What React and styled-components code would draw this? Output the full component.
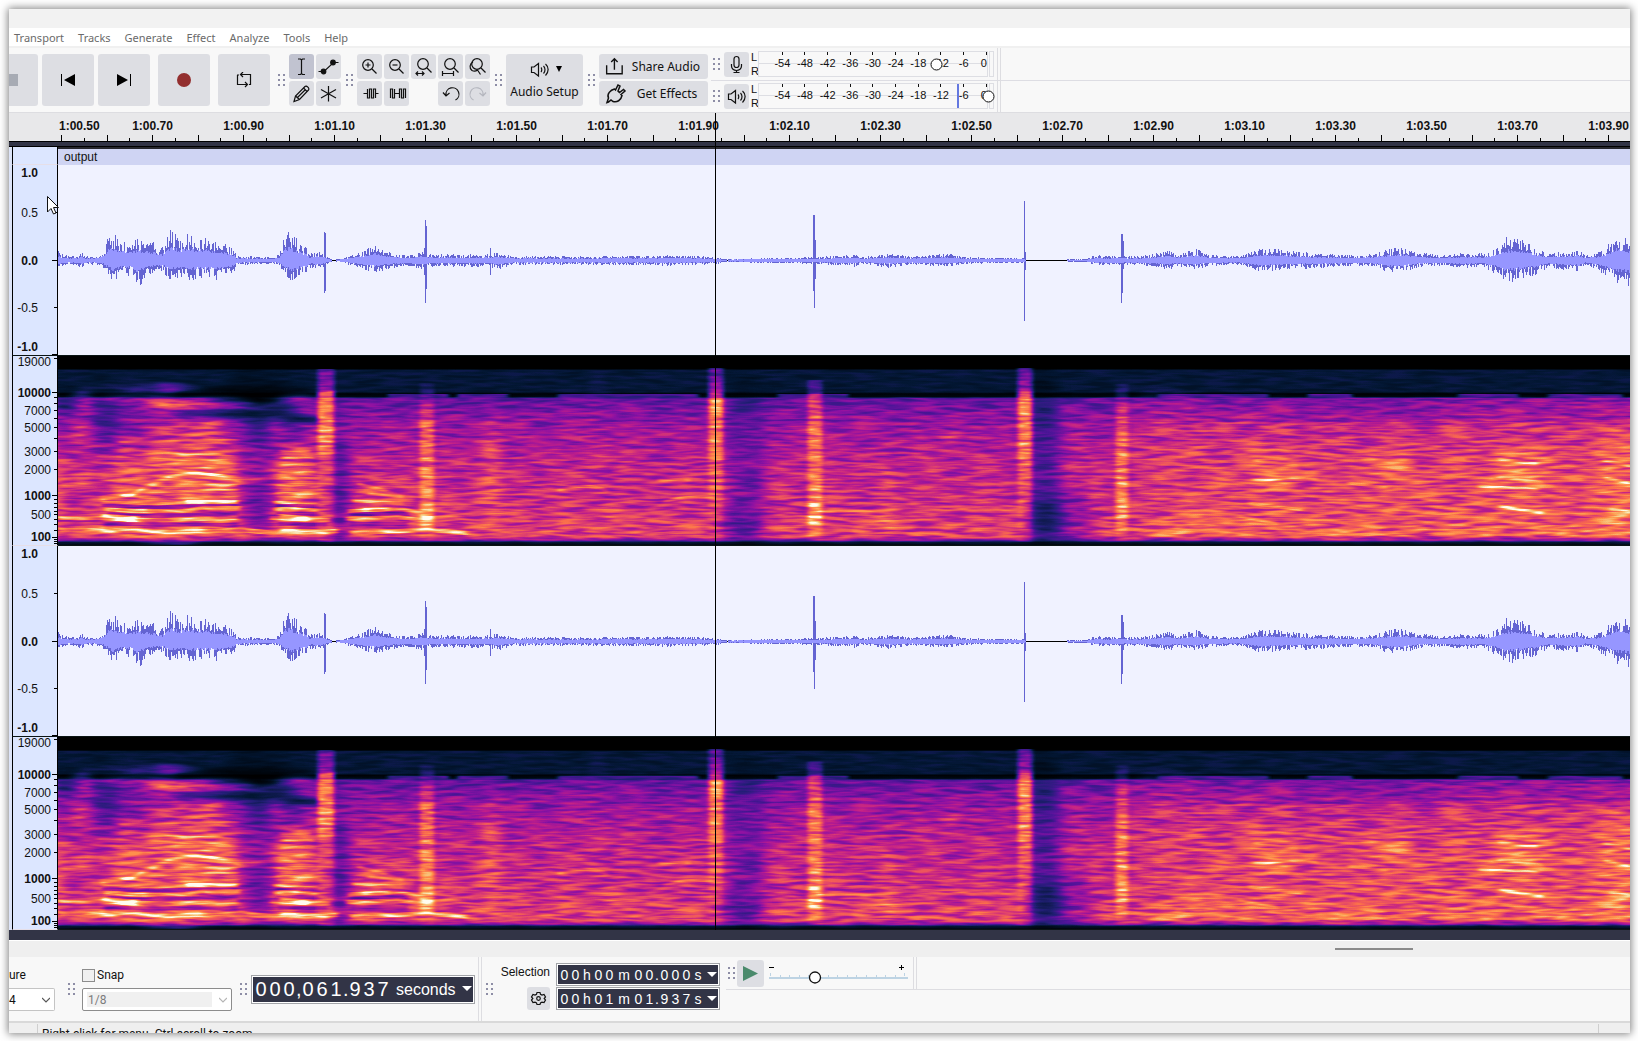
import React from "react";
import styled, { createGlobalStyle, css } from "styled-components";

const GlobalStyle = createGlobalStyle`
  * {
    box-sizing: border-box;
  }

  body {
    margin: 0;
    background: #ffffff;
    font-family: "Noto Sans", sans-serif;
    font-size: 12px;
    color: #111111;
  }

  button,
  input,
  select {
    font: inherit;
    color: inherit;
  }
`;

const Window = styled.div`
  position: relative;
  margin: 9px 8px 8px 9px;
  background: #f8f8f8;
  box-shadow: 0 0 8px 1px rgba(0, 0, 0, 0.5);
  overflow: hidden;
`;

const TitleBar = styled.div`
  height: 19px;
  background: #f2f2f2;
`;

const MenuBar = styled.nav`
  display: flex;
  align-items: center;
  gap: 14px;
  height: 20px;
  padding: 2px 5px 0;
  background: #ffffff;
  border-bottom: 2px solid #f0f0f0;
`;

const MenuLink = styled.a`
  font-family: "Noto Sans", sans-serif;
  font-size: 11px;
  line-height: 16px;
  color: #6a6a6a;
  text-decoration: none;
`;

/* ---------- toolbars ---------- */

const Toolbar = styled.div`
  display: flex;
  align-items: stretch;
  height: 65px;
  border-bottom: 1px solid #dddde1;
`;

const Group = styled.div`
  display: flex;
  align-items: center;
  gap: ${(p) => p.$gap || 0}px;
  padding-left: ${(p) => p.$pad || 0}px;
`;

const Button = styled.button`
  display: flex;
  flex-direction: ${(p) => (p.$column ? "column" : "row")};
  align-items: center;
  justify-content: center;
  flex: none;
  width: ${(p) => p.$w || 25}px;
  height: ${(p) => p.$h || 25}px;
  padding: 0;
  border: 0;
  border-radius: ${(p) => (p.$cut ? "0 3px 3px 0" : "3px")};
  background: ${(p) => (p.$active ? "#c1c3d0" : "#dddee3")};
  line-height: 16px;
  white-space: nowrap;
`;

const StopButton = styled(Button)`
  justify-content: flex-start;
`;

const ToolGrid = styled.div`
  display: grid;
  grid-template-columns: repeat(${(p) => p.$cols}, 25px);
  grid-auto-rows: 25px;
  gap: 2px;
`;

const WideButton = styled(Button)`
  justify-content: flex-start;
  gap: 6px;
  padding-left: 4px;
`;

const WideLabel = styled.span`
  flex: 1;
  padding-right: 8px;
  text-align: center;
`;

const SetupTop = styled.span`
  display: flex;
  align-items: center;
  gap: 4px;
  height: 18px;
  margin-bottom: 6px;
`;

const Stack = styled.div`
  display: flex;
  flex-direction: column;
  gap: ${(p) => p.$gap || 0}px;
`;

const MeterArea = styled.div`
  display: flex;
  flex-direction: column;
  flex: 1;
  background: linear-gradient(#dddde3, #dddde3) 0 32px / 100% 1px no-repeat;
`;

const MeterRow = styled.div`
  display: flex;
  align-items: center;
  height: 32px;
  padding-left: 2px;
`;

const Channels = styled.div`
  width: 9px;
  padding-left: 2px;
  font-family: "Liberation Sans", sans-serif;
  font-size: 11px;
  line-height: 14px;
`;

const MeterScale = styled.div`
  position: relative;
  display: grid;
  grid-template-columns: repeat(9, 1fr) 12px;
  align-items: center;
  width: 230px;
  height: 26px;
  padding-left: 12px;
  border: 1px solid #dddee3;
  background: linear-gradient(#dddee3, #dddee3) 0 11px / 100% 1px no-repeat;
  font-family: "Liberation Sans", sans-serif;
  font-size: 11px;
  text-align: center;
`;

const MeterMark = styled.span`
  height: 24px;
  line-height: 23px;
  text-align: ${(p) => (p.$last ? "right" : "center")};
  background: linear-gradient(#111, #111) ${(p) => (p.$last ? "100%" : "50%")} 0 / 1px 3px no-repeat;
`;

const ClipBox = styled.div`
  width: 5px;
  height: 26px;
  margin-left: 1px;
  border: 1px solid #dddee3;
`;

const MeterKnob = styled.svg`
  position: absolute;
  top: 6px;
  left: ${(p) => p.$left}px;
`;

const MeterPeak = styled.div`
  position: absolute;
  top: 0;
  left: 198px;
  width: 2px;
  height: 24px;
  background: #6478e0;
`;

const Rails = styled.div`
  flex: none;
  width: 4px;
  height: ${(p) => p.$h || 64}px;
  border-left: 1px solid #dddde1;
  border-right: 1px solid #dddde1;
`;

const MeterBlock = styled.div`
  display: flex;
`;

/* ---------- timeline ---------- */

const Timeline = styled.div`
  height: 28px;
  background: #e8e8ea;
  overflow: hidden;
`;

const TimeLabels = styled.div`
  display: flex;
  height: 22px;
  padding: 5px 0 0 50px;
  font: bold 12px/16px "Liberation Sans", sans-serif;
`;

const TimeLabel = styled.span`
  flex: none;
  width: ${(p) => (p.$first ? 48 : 91)}px;
  text-align: ${(p) => (p.$first ? "left" : "center")};
`;

const Ticks = styled.svg`
  display: block;
  width: 100%;
  height: 6px;
`;

const DarkBar = styled.div`
  height: ${(p) => p.$h}px;
  background: #323446;
  border-top: ${(p) => (p.$edge ? 1 : 0)}px solid #000;
  border-bottom: ${(p) => (p.$edge ? 1 : 0)}px solid #000;
`;

/* ---------- track ---------- */

const TrackArea = styled.div`
  position: relative;
`;

const TrackRow = styled.div`
  display: grid;
  grid-template-columns: 3px 46px minmax(0, 1fr);
  background: #dde4f8;
`;

const Side = styled.div`
  display: flex;
  justify-content: flex-end;
  border: solid #000;
  border-width: 0 1px;
  background: #dce6ff;
  ${(p) =>
    p.$rule &&
    css`
      border-bottom: 1px solid ${p.$rule};
    `}
`;

const ClipHeader = styled.div`
  height: 18px;
  padding-left: 6px;
  border-top: 2px solid #26262c;
  background: #cfd4f3;
  font: 12px/16px "Liberation Sans", sans-serif;
`;

const ScaleLabels = styled.div`
  display: grid;
  height: ${(p) => p.$h}px;
  grid-template-rows: ${(p) => p.$rows};
  align-items: ${(p) => p.$align};
  justify-items: end;
  padding-right: ${(p) => p.$pad}px;
  font: 12px/14px "Liberation Sans", sans-serif;
`;

const ScaleLabel = styled.span`
  font-weight: ${(p) => (p.$bold ? "bold" : "normal")};
`;

const ScaleTicks = styled.svg`
  display: block;
  flex: none;
  width: 6px;
  height: ${(p) => p.$h}px;
`;

const Plot = styled.div`
  height: ${(p) => p.$h}px;
  background: ${(p) => p.$bg};
  border-bottom: 1px solid #0a1414;

  svg {
    display: block;
    width: 100%;
    height: 100%;
  }
`;

const Playhead = styled.div`
  position: absolute;
  top: 0;
  bottom: 0;
  left: 706px;
  width: 1px;
  background: #000;
  z-index: 2;
`;

const Pointer = styled.svg`
  position: absolute;
  left: 38px;
  top: 83px;
`;

const ScrollStrip = styled.div`
  display: flex;
  justify-content: flex-end;
  height: 17px;
  padding: 7px 217px 0 0;
  border-top: 1px solid #fff;
  background: #efefef;
`;

const Thumb = styled.div`
  width: 78px;
  height: 2px;
  background: #8a8a8a;
`;

/* ---------- bottom bar ---------- */

const BottomBar = styled.div`
  display: flex;
  height: 64px;
`;

const Signature = styled.div`
  width: 46px;
  padding-top: 9px;
`;

const FieldLabel = styled.label`
  display: flex;
  align-items: center;
  gap: 2px;
  height: 18px;
  font: 12px/18px Roboto, sans-serif;
`;

const SelectBox = styled.div`
  position: relative;
  width: ${(p) => p.$w}px;
  height: 23px;
  margin-top: 4px;
`;

const Select = styled.select`
  display: block;
  width: 100%;
  height: 100%;
  padding: 0 4px 0 ${(p) => (p.$cut ? 0 : 5)}px;
  appearance: none;
  border: 1px solid ${(p) => (p.$cut ? "#c4c4c4" : "#8c8c8c")};
  border-left-width: ${(p) => (p.$cut ? 0 : 1)}px;
  border-radius: ${(p) => (p.$cut ? "0 2px 2px 0" : "2px")};
  background: ${(p) =>
    p.$cut ? "#fff" : "linear-gradient(#f0f0f0, #f0f0f0) 4px 3px / 125px 15px no-repeat #fff"};
  font: 12px Roboto, sans-serif;
  opacity: 1;
  color: ${(p) => (p.$cut ? "#111" : "#7c7c7c")};
`;

const Chevron = styled.svg`
  position: absolute;
  right: 5px;
  top: 9px;
  pointer-events: none;
`;

const Check = styled.input`
  appearance: none;
  width: 13px;
  height: 13px;
  margin: 0;
  border: 1px solid #8c8c8c;
  background: #f0f0f0;
`;

const SnapGroup = styled.div`
  width: 150px;
  margin-left: 7px;
  padding-top: 9px;
`;

const TimeField = styled.div`
  display: flex;
  align-items: center;
  width: ${(p) => (p.$big ? 224 : 164)}px;
  height: ${(p) => (p.$big ? 29 : 23)}px;
  padding-left: 2px;
  border: 1px solid #a2a4a8;
  outline: 1px solid #fff;
  outline-offset: -2px;
  background: linear-gradient(#323446, #323446) 1px 1px / calc(100% - 2px) calc(100% - 2px) no-repeat;
  color: #fff;
  font-family: "Liberation Sans", sans-serif;
  font-size: ${(p) => (p.$big ? 20 : 14)}px;
`;

const Digit = styled.span`
  width: ${(p) => p.$w}px;
  flex: none;
  text-align: center;
`;

const Unit = styled.span`
  flex: 1;
  padding: 2px 0 0 6px;
  font-size: 16px;
`;

const Drop = styled.button`
  display: flex;
  align-items: center;
  justify-content: flex-end;
  flex: none;
  width: 14px;
  height: 100%;
  margin-left: auto;
  padding: 0 2px 0 0;
  border: 0;
  background: none;
  color: #fff;
`;

const SelectionGroup = styled.div`
  display: grid;
  grid-template-columns: 51px 164px;
  grid-auto-rows: 23px;
  gap: 1px 6px;
  justify-items: end;
  padding: 6px 0 0 6px;
`;

const SelectionLabel = styled.span`
  font: 12px/18px "Liberation Sans", sans-serif;
`;

const SpeedArea = styled.div`
  flex: 1;
  background: linear-gradient(#dddde1, #dddde1) 6px 32px / 100% 1px no-repeat;
`;

const SpeedRow = styled.div`
  display: flex;
  align-items: center;
  height: 32px;
  padding: 0 0 0 8px;
`;

const Speed = styled.label`
  position: relative;
  width: 141px;
  height: 27px;
  margin: 0 4px 0 4px;
`;

const Range = styled.input`
  position: absolute;
  inset: 0;
  width: 100%;
  height: 100%;
  margin: 0;
  opacity: 0;
`;

const StatusBar = styled.footer`
  display: flex;
  height: 12px;
  border-top: 2px solid #d9d9d9;
  background: #efefef;
  font: 12px/14px Roboto, sans-serif;
  overflow: hidden;
`;

const StatusCell = styled.div`
  flex: ${(p) => (p.$w ? "none" : 1)};
  width: ${(p) => p.$w || 0}px;
  height: 14px;
  margin-top: 1px;
  padding: 3px 0 0 4px;
  border-right: 1px solid ${(p) => (p.$end ? "transparent" : "#cfcfcf")};
  white-space: nowrap;
`;

/* ---------- icons ---------- */

const GRIP_DOTS = [0, 5, 10];

function Grip({ color = "#8e8ea6" }) {
  return (
    <svg width="7" height="12" fill={color} aria-hidden="true">
      {GRIP_DOTS.map((y) => (
        <g key={y}>
          <rect x="0" y={y} width="2" height="2" />
          <rect x="5" y={y} width="2" height="2" />
        </g>
      ))}
    </svg>
  );
}

function Icon({ size = 25, children }) {
  return (
    <svg
      width={size}
      height={size}
      viewBox={`0 0 ${size} ${size}`}
      fill="none"
      stroke="#111"
      strokeWidth="1.2"
      aria-hidden="true"
    >
      {children}
    </svg>
  );
}

const Lens = ({ cx = 11, cy = 11 }) => (
  <>
    <circle cx={cx} cy={cy} r="5.3" />
    <path d={`M${cx + 4} ${cy + 4}L${cx + 8.5} ${cy + 8.5}`} />
  </>
);

const ICONS = {
  select: <path d="M9 5h2.500l1 1 1-1H16M9 20.500h2.500l1-1 1 1H16M12.500 6v14" />,
  envelope: (
    <>
      <path d="M2.500 17.500H8L17.500 8.500H22.500" />
      <circle cx="7.5" cy="17.500" r="2.300" fill="#111" />
      <circle cx="17" cy="8.500" r="2.300" fill="#111" />
    </>
  ),
  draw: (
    <>
      <path d="M5 20.500l1.500-5.500L16 5.500c1.500-1.500 5 2 3.500 3.500L10.500 18.500z" />
      <path d="M6.500 15l4 3.500M14.500 7l3.500 3.500M8.500 16.500l8-8" />
    </>
  ),
  multi: <path d="M12.500 5v15.500M5 8.500l15 8.500M20 8.500l-15 8.500" />,
  zoomIn: (
    <>
      <Lens />
      <path d="M8.500 11h5M11 8.500v5" />
    </>
  ),
  zoomOut: (
    <>
      <Lens />
      <path d="M8.500 11h5" />
    </>
  ),
  zoomSel: (
    <>
      <Lens cx={12} cy={10} />
      <path d="M5 19.500h8M7 17.500l-2 2 2 2M11 17.500l2 2-2 2" />
    </>
  ),
  zoomFit: (
    <>
      <Lens cx={12} cy={10} />
      <path d="M4.500 19.500h11M4.500 17v5M15.500 17v5" />
    </>
  ),
  zoomToggle: (
    <>
      <Lens cx={12} cy={10} />
      <path d="M8 8a5 5 0 0 0-1 8.500 5 5 0 0 0 5.500-.5M12.500 16l3 4.500" />
    </>
  ),
  trim: <path d="M6.500 12.500H10.500V8M10.500 8V17H12.500V8H14.500V17H16.500V8H18.500V17M18.500 12.500H21.500" />,
  silence: (
    <path d="M6.500 17V8H8.500V17H10.500V8M10.500 12.500h5M15.500 17V8H17.500V17H19.500V8H21.500V17" />
  ),
  undo: <path d="M8 14a6.500 6.500 0 1 1 9.500 5M5 11.500l3 3.500 3.500-3" />,
  redo: (
    <path
      stroke="#b4b6be"
      d="M18 14a6.500 6.500 0 1 0-9.500 5M21 11.500l-3 3.500-3.500-3"
    />
  ),
  share: <path strokeWidth="1.500" d="M4 11v9.500h17V11M12.500 16V4M9 7.500l3.500-3.500L16 7.500" />,
  effects: (
    <path
      strokeWidth="1.500"
      d="M4 21.500l1.500-4.500c-2-4 2-8 6-9l1 1 2.500-5 2 1-2 5 1.500 1.500 4-3 1.500 1.500-4 3.500 1 1c-1 5-5 7-9 6l-2-1.500L5.500 21z"
    />
  ),
  mic: (
    <>
      <rect x="10" y="4.500" width="5" height="11" rx="2.500" />
      <path d="M7.500 12v2a5 4.500 0 0 0 10 0v-2M12.500 18.500v2M9.500 20.500h6" />
    </>
  ),
  speaker: (
    <path d="M4.500 10v5.500H7l4.500 3.500V6.500L7 10zM14 10.500c1 1 1 3.500 0 4.500M16.500 9c2 2 2 5.500 0 7.500M18.500 7c3.500 3 3.500 8 0 11.500" />
  ),
};

const Gear = () => (
  <Icon size={23}>
    <circle cx="11.500" cy="11.500" r="1.800" />
    <path d="M10 5.500h3l.5 1.800 1.500.8 2-.6 1.500 2.500-1.300 1.500 1.300 1.500-1.500 2.500-2-.4-1.500.9-.5 1.500h-3l-.5-1.500-1.500-.9-2 .4-1.500-2.500 1.300-1.500L4.500 10 6 7.500l2 .6 1.500-.8z" />
  </Icon>
);

const DropArrow = () => (
  <svg width="10" height="6" fill="#fff" aria-hidden="true">
    <path d="M0 0H10L5 5z" />
  </svg>
);

function PickArrow({ color }) {
  return (
    <Chevron width="8" height="6" fill="none" stroke={color} strokeWidth="1.200">
      <path d="M0 1l4 4 4-4" />
    </Chevron>
  );
}

/* ---------- drawings ---------- */

const PLOT_WIDTH = 1572;

// [x, amplitude above, amplitude below]
const ENVELOPE = [
  [0, 11, 9], [3, 6, 5], [12, 4, 4], [20, 5, 5], [23, 9, 8], [27, 4, 4], [40, 4, 4], [46, 12, 9],
  [50, 25, 16], [54, 28, 24], [62, 24, 16], [72, 20, 16], [80, 24, 28], [87, 19, 18], [94, 20, 15],
  [100, 13, 12], [104, 14, 12], [110, 28, 18], [113, 32, 21], [120, 25, 17], [132, 27, 21],
  [142, 26, 18], [152, 22, 20], [160, 20, 19], [170, 16, 16], [176, 10, 11], [178, 4, 4],
  [190, 4, 4], [215, 3, 3], [221, 7, 6], [227, 30, 16], [234, 28, 24], [242, 18, 16],
  [248, 15, 14], [251, 7, 7], [262, 10, 9], [271, 2, 2], [274, 0, 0], [285, 2, 2], [300, 8, 8],
  [316, 15, 13], [330, 9, 9], [348, 5, 5], [365, 9, 9], [372, 6, 6], [400, 6, 6], [430, 6, 6],
  [440, 8, 9], [455, 4, 4], [520, 4, 4], [620, 5, 5], [660, 3, 3], [664, 1, 1], [700, 2, 2],
  [750, 3, 3], [770, 4, 4], [797, 6, 6], [803, 3, 3], [830, 7, 7], [850, 4, 4], [890, 7, 6],
  [910, 3, 3], [966, 2, 2], [968, 0, 0], [1006, 0, 0], [1010, 1, 1], [1028, 1, 1], [1038, 6, 5],
  [1045, 4, 4], [1060, 5, 5], [1080, 4, 4], [1112, 10, 9], [1118, 6, 6], [1138, 12, 9],
  [1150, 6, 5], [1180, 4, 4], [1204, 13, 12], [1225, 11, 9], [1250, 8, 8], [1295, 5, 5],
  [1315, 7, 6], [1338, 14, 15], [1360, 8, 7], [1385, 5, 5], [1405, 8, 8], [1425, 7, 6],
  [1440, 14, 16], [1448, 24, 25], [1465, 20, 18], [1475, 14, 16], [1490, 7, 7], [1520, 11, 11],
  [1527, 5, 4], [1545, 10, 13], [1558, 26, 25], [1571, 22, 28],
];

const SPIKES = {
  266: [28, 32], 267: [27, 30], 366: [12, 14], 367: [40, 42], 368: [34, 28], 432: [12, 14],
  755: [45, 30], 756: [45, 47], 757: [20, 18], 966: [59, 60], 967: [8, 9], 1063: [26, 42],
  1064: [26, 32], 1065: [19, 8],
};

const noise = (i) => {
  const v = Math.sin(i * 127.1 + 11.7) * 43758.5453;
  return v - Math.floor(v);
};

function buildWave() {
  let outer = "";
  let inner = "";
  let seg = 0;
  for (let x = 0; x < PLOT_WIDTH; x += 1) {
    while (seg < ENVELOPE.length - 2 && ENVELOPE[seg + 1][0] <= x) seg += 1;
    const [x0, u0, d0] = ENVELOPE[seg];
    const [x1, u1, d1] = ENVELOPE[seg + 1];
    const t = (x - x0) / (x1 - x0);
    const env = [u0 + (u1 - u0) * t, d0 + (d1 - d0) * t];
    let up = env[0] * (0.32 + 0.65 * noise(x));
    let down = env[1] * (0.32 + 0.65 * noise(x + 5000));
    if (SPIKES[x]) [up, down] = SPIKES[x];
    up = Math.round(up);
    down = Math.round(down);
    if (up + down > 0) {
      const innerUp = Math.min(up, Math.round(env[0] * (0.3 + 0.16 * noise(x + 900))));
      const innerDown = Math.min(down, Math.round(env[1] * (0.3 + 0.16 * noise(x + 1900))));
      outer += `M${x} ${95 - up}V${96 + down}`;
      inner += `M${x} ${95 - innerUp}V${96 + innerDown}`;
    }
  }
  return { outer, inner };
}

const WAVE = buildWave();

function Waveform() {
  return (
    <svg viewBox="0 0 1572 190" preserveAspectRatio="none" shapeRendering="crispEdges" role="img" aria-label="Waveform">
      <rect x="0" y="95" width="1572" height="1" fill="#000" />
      <g transform="translate(.5 0)">
        <path d={WAVE.outer} stroke="#6464d2" strokeWidth="1" />
        <path d={WAVE.inner} stroke="#9696ff" strokeWidth="1" />
      </g>
    </svg>
  );
}

// [cx, cy, rx, ry, strength]
const GLOWS = [
  [112, 135, 70, 55, 0.16], [150, 110, 30, 45, 0.2], [110, 105, 20, 18, 0.2], [75, 125, 20, 20, 0.1],
  [235, 120, 18, 34, 0.28], [235, 160, 18, 24, 0.15], [24, 123, 8, 7, 0.35], [24, 76, 8, 12, 0.2],
  [110, 50, 26, 4, 0.4], [110, 50, 8, 3, 0.4], [110, 32, 12, 3, 0.4], [80, 43, 40, 3, 0.22],
  [85, 32, 60, 3, 0.15], [155, 48, 40, 6, 0.22], [240, 43, 18, 3, 0.26], [140, 72, 50, 10, 0.16],
  [24, 46, 9, 14, 0.2], [218, 76, 8, 14, 0.22], [0, 130, 8, 30, 0.25], [330, 135, 30, 20, 0.1],
  [390, 155, 12, 18, 0.15], [434, 130, 10, 50, 0.2], [434, 75, 10, 25, 0.1], [490, 140, 14, 30, 0.08],
  [540, 80, 12, 60, 0.06], [552, 156, 8, 10, 0.3], [690, 165, 6, 10, 0.1], [765, 130, 10, 40, 0.05],
  [830, 165, 10, 10, 0.25], [830, 140, 8, 30, 0.12], [893, 85, 7, 9, 0.25], [875, 115, 8, 14, 0.12],
  [822, 112, 8, 6, 0.15], [1037, 140, 7, 24, 0.18], [1115, 175, 16, 5, 0.4], [1138, 163, 8, 8, 0.3],
  [1150, 176, 30, 4, 0.15], [1105, 80, 40, 50, 0.06], [1210, 112, 32, 26, 0.14], [1215, 120, 22, 12, 0.12],
  [1330, 108, 24, 12, 0.22], [1345, 122, 16, 8, 0.18], [1460, 112, 34, 24, 0.2],
  [1465, 125, 24, 14, 0.14], [1465, 150, 24, 8, 0.14], [1562, 120, 22, 50, 0.18],
  [1190, 162, 8, 4, 0.4], [1560, 160, 12, 8, 0.35], [1510, 176, 16, 4, 0.3], [1566, 175, 12, 4, 0.4],
  [1280, 179, 24, 4, 0.25], [100, 175, 70, 4, 0.1],
];

const SHADES = [
  [195, 50, 40, 40, 0.3], [201, 150, 16, 40, 0.34], [282, 130, 8, 60, 0.5], [688, 100, 20, 90, 0.26],
  [683, 170, 26, 16, 0.45], [984, 100, 18, 100, 0.4], [988, 168, 22, 24, 0.5], [1015, 160, 30, 28, 0.25],
  [215, 70, 30, 30, 0.25], [48, 60, 14, 30, 0.3], [1310, 58, 80, 10, 0.08], [10, 52, 14, 10, 0.3],
];

const STREAKS = [
  [175, 58, 60, 2, 1], [190, 44, 34, 4, 1], [250, 63, 25, 3, 0.9], [190, 35, 60, 5, 0.6],
  [100, 90, 20, 3, 0.5], [40, 33, 30, 3, 0.6], [8, 50, 14, 2, 0.6], [60, 70, 20, 2, 0.4],
];

// purple wisps over the dark gap below 10 kHz
const WISPS = [
  [330, 60], [400, 50], [500, 90], [580, 60], [720, 70], [1100, 100], [1140, 36], [1180, 30],
  [1250, 44], [1400, 60], [1490, 50], [1540, 24],
];

// [x, top, width, stops] with stops as [offset, strength]
const CLICKS = [
  [260, 13, 16, [[0, 0.25], [0.12, 0.34], [0.14, 0.64], [0.3, 0.64], [0.49, 0.52], [0.5, 0.25], [1, 0.1]]],
  [362, 27, 14, [[0, 0.05], [0.2, 0.25], [0.3, 0.48], [0.6, 0.4], [0.85, 0.6], [1, 0]]],
  [651, 12, 14, [[0, 0.2], [0.14, 0.38], [0.15, 0.62], [0.35, 0.58], [0.6, 0.3], [1, 0.05]]],
  [750, 24, 14, [[0, 0.12], [0.15, 0.35], [0.35, 0.54], [0.6, 0.4], [0.85, 0.75], [1, 0]]],
  [960, 12, 14, [[0, 0.25], [0.13, 0.38], [0.14, 0.66], [0.45, 0.6], [0.65, 0.4], [1, 0.1]]],
  [1058, 28, 12, [[0, 0.05], [0.3, 0.35], [0.55, 0.5], [0.85, 0.52], [1, 0]]],
];

// [path, width, strength]
const HARMONICS = [
  ["M0 174L40 174L120 176L185 174L215 177L280 175M292 177L370 174L410 177", 4.500, 0.52],
  ["M42 173L58 174M222 175L270 176", 5, 0.5],
  ["M0 162L40 162L85 164L120 164L180 162M212 162L272 164M288 163L340 161L370 165", 4, 0.48],
  ["M44 161L60 162L78 163M222 161L250 163", 6, 0.7],
  ["M46 153L60 154L90 155L120 156L145 152L182 152M216 153L260 154M290 155L345 153L362 157", 3.500, 0.52],
  ["M58 154L88 155M220 153L240 153M305 154L332 153", 4, 0.65],
  ["M44 146L100 148L128 146L180 146M216 146L260 147M295 145L345 147", 3, 0.42],
  ["M128 146L180 146", 4, 0.7],
  ["M42 142L76 138L108 122L138 118L168 121L182 124", 5, 0.3],
  ["M64 140L76 138L86 132M108 121L138 117L168 120", 3, 0.5],
  ["M80 142L180 141M84 136L180 134M92 130L180 129M120 112L176 112M100 105L170 104M108 98L165 98", 2.500, 0.25],
  ["M218 137L262 138M218 130L262 131M220 123L262 122M222 116L258 116M222 109L258 109M224 102L256 102M222 95L252 95", 2.500, 0.35],
  ["M300 128L325 134L345 141M310 138L340 140", 3, 0.4],
  ["M182 123L260 123M60 86L180 84", 2.500, 0.2],
  ["M605 146Q625 140 657 141M600 124L632 124M500 134Q530 126 550 135", 3, 0.35],
  ["M940 130L960 130M760 156L960 153", 2.500, 0.2],
  ["M1196 104L1240 110M1195 124L1260 123M1190 147L1245 154M1180 160L1220 168M1330 132L1290 127", 3, 0.4],
  ["M1440 103L1480 108M1440 121L1485 127M1420 130L1480 134M1440 150L1485 157M1545 104L1572 110M1546 122L1572 127M1552 153L1572 156", 3, 0.5],
];

// gaps between the harmonics of the voiced parts
const VALLEYS = [
  "M46 168L180 169M220 168L270 169M292 168L350 168",
  "M50 158L90 160L180 157M218 158L262 158M292 158L350 158",
  "M44 150L110 151L180 149M218 150L262 150",
];

const RAMP = {
  r: "0 0.01 0.13 0.31 0.55 0.75 0.89 0.98 1 0.96 1",
  g: "0 0.09 0.12 0.08 0.07 0.12 0.27 0.42 0.6 0.82 0.99",
  b: "0 0.2 0.46 0.6 0.64 0.54 0.42 0.3 0.3 0.54 0.94",
};

function Spectrogram({ id }) {
  const f = (name) => `${id}-${name}`;
  return (
    <svg viewBox="0 0 1572 189" preserveAspectRatio="none" role="img" aria-label="Spectrogram">
      <defs>
        <linearGradient id={f("base")} x1="0" y1="0" x2="0" y2="189" gradientUnits="userSpaceOnUse">
          <stop offset="0" stopColor="#000" />
          <stop offset=".068" stopColor="#000" />
          <stop offset=".075" stopColor="#1c1c1c" />
          <stop offset=".19" stopColor="#1a1a1a" />
          <stop offset=".2" stopColor="#030303" />
          <stop offset=".215" stopColor="#0a0a0a" />
          <stop offset=".225" stopColor="#525252" />
          <stop offset=".35" stopColor="#6a6a6a" />
          <stop offset=".55" stopColor="#7e7e7e" />
          <stop offset=".8" stopColor="#888" />
          <stop offset=".95" stopColor="#9a9a9a" />
          <stop offset=".975" stopColor="#666" />
          <stop offset=".985" stopColor="#1c1c1c" />
          <stop offset="1" stopColor="#080808" />
        </linearGradient>
        <linearGradient id={f("warm")} x1="0" x2="1">
          <stop offset=".67" stopColor="#fff" stopOpacity="0" />
          <stop offset=".72" stopColor="#fff" stopOpacity=".12" />
          <stop offset="1" stopColor="#fff" stopOpacity=".18" />
        </linearGradient>
        {CLICKS.map(([x, , , stops]) => (
          <linearGradient key={x} id={f(`c${x}`)} x1="0" x2="0" y1="0" y2="1">
            {stops.map(([o, s]) => (
              <stop key={o} offset={o} stopColor="#fff" stopOpacity={s} />
            ))}
          </linearGradient>
        ))}
        <filter id={f("haze")} x="-5%" y="-5%" width="110%" height="110%">
          <feGaussianBlur stdDeviation="7 12" />
        </filter>
        <filter id={f("soft")} x="-5%" y="-5%" width="110%" height="110%">
          <feGaussianBlur stdDeviation="6 2.5" />
        </filter>
        <filter id={f("edge")} x="-5%" y="-5%" width="110%" height="110%">
          <feGaussianBlur stdDeviation="2 .7" />
        </filter>
        <filter id={f("heat")} x="0" y="0" width="1572" height="189" filterUnits="userSpaceOnUse" colorInterpolationFilters="sRGB">
          <feTurbulence type="fractalNoise" baseFrequency=".034 .3" numOctaves="2" seed="7" />
          <feColorMatrix values="2.2 0 0 0 -.6  2.2 0 0 0 -.6  2.2 0 0 0 -.6  0 0 0 0 1" result="grain" />
          <feComposite in="SourceGraphic" in2="grain" operator="arithmetic" k1=".5" k2=".75" />
          <feComponentTransfer>
            <feFuncR type="table" tableValues={RAMP.r} />
            <feFuncG type="table" tableValues={RAMP.g} />
            <feFuncB type="table" tableValues={RAMP.b} />
            <feFuncA type="table" tableValues="1 1" />
          </feComponentTransfer>
        </filter>
      </defs>
      <g filter={`url(#${f("heat")})`}>
        <rect width="1572" height="189" fill={`url(#${f("base")})`} />
        <rect y="66" width="1572" height="114" fill={`url(#${f("warm")})`} opacity=".7" />
        <rect y="42" width="1572" height="140" fill={`url(#${f("warm")})`} opacity=".6" />
        <g filter={`url(#${f("haze")})`}>
          {SHADES.map(([cx, cy, rx, ry, s]) => (
            <ellipse key={`${cx}-${cy}`} cx={cx} cy={cy} rx={rx} ry={ry} fill="#000" opacity={s} />
          ))}
        </g>
        <g filter={`url(#${f("soft")})`}>
          {STREAKS.map(([cx, cy, rx, ry, s]) => (
            <ellipse key={`${cx}-${cy}`} cx={cx} cy={cy} rx={rx} ry={ry} fill="#000" opacity={s} />
          ))}
        </g>
        <g filter={`url(#${f("edge")})`}>
          {WISPS.map(([x, w]) => (
            <rect key={x} x={x} y="38" width={w} height="4" fill="#444" />
          ))}
        </g>
        <g filter={`url(#${f("soft")})`}>
          {GLOWS.map(([cx, cy, rx, ry, s]) => (
            <ellipse key={`${cx}-${cy}-${rx}`} cx={cx} cy={cy} rx={rx} ry={ry} fill="#fff" opacity={s} />
          ))}
        </g>
        <g filter={`url(#${f("edge")})`}>
          {VALLEYS.map((d) => (
            <path key={d} d={d} fill="none" stroke="#000" strokeWidth="4" opacity=".3" />
          ))}
          {HARMONICS.map(([d, w, s]) => (
            <path key={d} d={d} fill="none" stroke="#fff" strokeWidth={w} opacity={s} />
          ))}
          {CLICKS.map(([x, top, w]) => (
            <rect key={x} x={x} y={top} width={w} height={186 - top} fill={`url(#${f(`c${x}`)})`} />
          ))}
        </g>
      </g>
    </svg>
  );
}

/* ---------- sections ---------- */

const MENUS = ["Transport", "Tracks", "Generate", "Effect", "Analyze", "Tools", "Help"];

const EDIT_TOOLS = [
  ["select", "Selection tool"],
  ["envelope", "Envelope tool"],
  ["draw", "Draw tool"],
  ["multi", "Multi-tool"],
];

const ZOOM_TOOLS = [
  ["zoomIn", "Zoom in"],
  ["zoomOut", "Zoom out"],
  ["zoomSel", "Fit selection"],
  ["zoomFit", "Fit project"],
  ["zoomToggle", "Zoom toggle"],
  ["trim", "Trim"],
  ["silence", "Silence"],
  null,
  ["undo", "Undo"],
  ["redo", "Redo"],
];

const LEVELS = ["-54", "-48", "-42", "-36", "-30", "-24", "-18", "-12", "-6", "0"];

function Meter({ icon, label, knob, peak }) {
  return (
    <MeterRow>
      <Grip />
      <Group $pad={4}>
        <Button aria-label={label}>
          <Icon>{ICONS[icon]}</Icon>
        </Button>
      </Group>
      <Channels>
        <div>L</div>
        <div>R</div>
      </Channels>
      <MeterScale>
        {LEVELS.map((l) => (
          <MeterMark key={l} $last={l === "0"}>
            {l}
          </MeterMark>
        ))}
        {peak && <MeterPeak />}
        <MeterKnob $left={knob} width="13" height="13" fill="#fff" stroke="#111">
          <circle cx="6.5" cy="6.5" r="5.5" />
        </MeterKnob>
      </MeterScale>
      <ClipBox />
    </MeterRow>
  );
}

function TopToolbar() {
  return (
    <Toolbar>
      <Group $gap={4}>
        <StopButton $w={29} $h={52} $cut aria-label="Stop">
          <svg width="9" height="12">
            <rect width="9" height="12" fill="#a7abb4" />
          </svg>
        </StopButton>
        <Button $w={52} $h={52} aria-label="Skip to start">
          <svg width="14" height="12">
            <path d="M0 0h1v12H0zM14 0v12L3 6z" />
          </svg>
        </Button>
        <Button $w={52} $h={52} aria-label="Skip to end">
          <svg width="14" height="12">
            <path d="M13 0h1v12h-1zM0 0v12L11 6z" />
          </svg>
        </Button>
      </Group>
      <Group $pad={8} $gap={8}>
        <Button $w={52} $h={52} aria-label="Record">
          <svg width="14" height="14">
            <circle cx="7" cy="7" r="7" fill="#932f2f" />
          </svg>
        </Button>
        <Button $w={52} $h={52} aria-label="Loop">
          <svg width="16" height="16" fill="none" stroke="#111" strokeWidth="1.200">
            <path d="M1.500 3v9.500H11M4.500 2.500h10V13M7 0L4.500 2.500 7 5M9 10l2.500 2.500L9 15M1 3h2M13 12.500h2" />
          </svg>
        </Button>
      </Group>
      <Group $pad={8} $gap={4}>
        <Grip />
        <ToolGrid $cols={2}>
          {EDIT_TOOLS.map(([name, label], i) => (
            <Button key={name} $active={i === 0} aria-label={label}>
              <Icon>{ICONS[name]}</Icon>
            </Button>
          ))}
        </ToolGrid>
      </Group>
      <Group $pad={5} $gap={4}>
        <Grip />
        <ToolGrid $cols={5}>
          {ZOOM_TOOLS.map((t) =>
            t ? (
              <Button key={t[0]} aria-label={t[1]}>
                <Icon>{ICONS[t[0]]}</Icon>
              </Button>
            ) : (
              <span key="gap" />
            )
          )}
        </ToolGrid>
      </Group>
      <Group $pad={5} $gap={4}>
        <Grip />
        <Button $w={77} $h={52} $column>
          <SetupTop>
            <Icon>{ICONS.speaker}</Icon>
            <svg width="6" height="6">
              <path d="M0 0h6L3 6z" />
            </svg>
          </SetupTop>
          Audio Setup
        </Button>
      </Group>
      <Group $pad={5} $gap={4}>
        <Grip />
        <Stack $gap={2}>
          <WideButton $w={109}>
            <Icon>{ICONS.share}</Icon>
            <WideLabel>Share Audio</WideLabel>
          </WideButton>
          <WideButton $w={109}>
            <Icon>{ICONS.effects}</Icon>
            <WideLabel>Get Effects</WideLabel>
          </WideButton>
        </Stack>
      </Group>
      <Group $pad={3} />
      <MeterArea>
        <MeterBlock>
          <Stack>
            <Meter icon="mic" label="Record meter" knob={171} />
            <Meter icon="speaker" label="Playback meter" knob={223} peak />
          </Stack>
          <Group $pad={3}>
            <Rails />
          </Group>
        </MeterBlock>
      </MeterArea>
    </Toolbar>
  );
}

const TIMES = Array.from({ length: 18 }, (_, i) => {
  const t = 50 + i * 20;
  const sec = Math.floor(t / 100);
  return `1:0${sec}.${String(t % 100).padStart(2, "0")}`;
});

function TimeRuler() {
  const ticks = Array.from({ length: 90 }, (_, i) => Math.round(52 + i * 22.75));
  return (
    <Timeline>
      <TimeLabels>
        {TIMES.map((t, i) => (
          <TimeLabel key={t} $first={i === 0}>
            {t}
          </TimeLabel>
        ))}
      </TimeLabels>
      <Ticks shapeRendering="crispEdges">
        {ticks.map((x, i) => (
          <rect key={x} x={x} y={i % 2 ? 3 : 0} width="1" height="6" />
        ))}
      </Ticks>
    </Timeline>
  );
}

const FREQS = [19000, 10000, 7000, 5000, 3000, 2000, 1000, 500, 100];
const FREQ_ROWS = [13, 31, 18, 17, 24, 18, 26, 19, 22, 1].map((n) => `minmax(0, ${n}fr)`).join(" ");
const FREQ_TICKS = [36, 41, 47, 54, 62, 71, 82, 95, 113, 139, 143, 147, 151, 155, 158, 163, 168, 174, 181, 183, 185, 187];
const BOLD_FREQS = [10000, 1000, 100];

const AMPS = ["1.0", "0.5", "0.0", "-0.5", "-1.0"];

function Channel({ id, specHeight }) {
  return (
    <>
      <TrackRow>
        <span />
        <Side $rule="#0a1414">
          <ScaleLabels $h={190} $rows="15px 65px 31px 63px 16px" $align="center" $pad={13}>
            {AMPS.map((a, i) => (
              <ScaleLabel key={a} $bold={i % 2 === 0}>
                {a}
              </ScaleLabel>
            ))}
          </ScaleLabels>
          <ScaleTicks $h={190} viewBox="0 0 6 190" shapeRendering="crispEdges">
            <path d="M1 95h5v1h-5zM3 47h3v1h-3zM3 142h3v1h-3zM1 189h5v1h-5z" />
          </ScaleTicks>
        </Side>
        <Plot $h={191} $bg="#f0f2ff">
          <Waveform />
        </Plot>
      </TrackRow>
      <TrackRow>
        <span />
        <Side $rule="#e6dfe8">
          <ScaleLabels $h={specHeight - 1} $rows={FREQ_ROWS} $align="end" $pad={0}>
            {FREQS.map((f) => (
              <ScaleLabel key={f} $bold={BOLD_FREQS.includes(f)}>
                {f}
              </ScaleLabel>
            ))}
          </ScaleLabels>
          <ScaleTicks $h={specHeight - 1} viewBox="0 0 6 189" preserveAspectRatio="none" shapeRendering="crispEdges">
            {FREQ_TICKS.map((y) => (
              <rect key={y} x={[36, 139, 181].includes(y) ? 1 : 3} y={y} width="5" height="1" />
            ))}
            <rect x="3" y="2" width="3" height="1" />
          </ScaleTicks>
        </Side>
        <Plot $h={specHeight} $bg="#000">
          <Spectrogram id={id} />
        </Plot>
      </TrackRow>
    </>
  );
}

const SMALL_WIDTHS = { h: 12, m: 18, ".": 4, s: 12 };

function SmallTime({ value, label }) {
  return (
    <TimeField role="group" aria-label={label}>
      {[...value].map((c, i) => (
        <Digit key={i} $w={SMALL_WIDTHS[c] || 11}>
          {c}
        </Digit>
      ))}
      <Drop aria-label={`${label} format`}>
        <DropArrow />
      </Drop>
    </TimeField>
  );
}

function BottomToolbar() {
  return (
    <BottomBar>
      <Signature>
        <FieldLabel htmlFor="signature">ure</FieldLabel>
        <SelectBox $w={46}>
          <Select id="signature" $cut defaultValue="4">
            <option>4</option>
          </Select>
          <PickArrow color="#555" />
        </SelectBox>
      </Signature>
      <Group $pad={13}>
        <Grip />
      </Group>
      <SnapGroup>
        <FieldLabel>
          <Check type="checkbox" />
          Snap
        </FieldLabel>
        <SelectBox $w={150}>
          <Select aria-label="Snap to" disabled defaultValue="1/8">
            <option>1/8</option>
          </Select>
          <PickArrow color="#b4b4b4" />
        </SelectBox>
      </SnapGroup>
      <Group $pad={8} $gap={4}>
        <Grip />
        <TimeField $big role="group" aria-label="Audio position">
          {[..."000,061.937"].map((c, i) => (
            <Digit key={i} $w={/\d/.test(c) ? 14 : 5}>
              {c}
            </Digit>
          ))}
          <Unit>seconds</Unit>
          <Drop aria-label="Position format">
            <DropArrow />
          </Drop>
        </TimeField>
      </Group>
      <Group $pad={3} $gap={4}>
        <Rails />
        <Grip />
      </Group>
      <SelectionGroup>
        <SelectionLabel>Selection</SelectionLabel>
        <SmallTime value="00h00m00.000s" label="Selection start" />
        <Button $w={23} $h={23} aria-label="Selection options">
          <Gear />
        </Button>
        <SmallTime value="00h01m01.937s" label="Selection end" />
      </SelectionGroup>
      <SpeedArea>
        <SpeedRow>
          <Grip />
          <Group $pad={2}>
            <Button $w={27} $h={27} aria-label="Play at speed">
              <svg width="15" height="15">
                <path d="M0 0L15 7.500 0 15z" fill="#4a8a6c" />
              </svg>
            </Button>
          </Group>
          <Speed>
            <svg width="141" height="27" aria-hidden="true">
              <g fill="#bdd3e3">
                <rect x="1" y="17" width="139" height="2" />
                {Array.from({ length: 15 }, (_, i) => (
                  <rect key={i} x={2 + Math.round(i * 9.600)} y={i % 14 ? 15 : 13} width="1" height="3" />
                ))}
              </g>
              <path d="M1 7h5v1h-5zM131 7h5v1h-5zM133 5h1v5h-1z" />
              <circle cx="47" cy="17.500" r="5.500" fill="#fff" stroke="#111" strokeWidth="1.300" />
            </svg>
            <Range type="range" aria-label="Playback speed" defaultValue={33} />
          </Speed>
          <Rails $h={32} />
        </SpeedRow>
      </SpeedArea>
    </BottomBar>
  );
}

export default function App() {
  return (
    <>
      <GlobalStyle />
      <Window>
        <TitleBar />
        <MenuBar>
          {MENUS.map((m) => (
            <MenuLink key={m} href="#">
              {m}
            </MenuLink>
          ))}
        </MenuBar>
        <TopToolbar />
        <TrackArea>
          <TimeRuler />
          <DarkBar $h={6} $edge />
          <TrackRow>
            <span />
            <Side $rule="#e6dfe8" />
            <ClipHeader>output</ClipHeader>
          </TrackRow>
          <Channel id="left" specHeight={190} />
          <Channel id="right" specHeight={193} />
          <Playhead />
          <Pointer width="12" height="19" viewBox="0 0 12 19" fill="#fff" stroke="#111">
            <path d="M.5.5v15.500l3.500-3.500 2.500 5.500 2.500-1-2.500-5.500h5z" />
          </Pointer>
        </TrackArea>
        <DarkBar $h={10} />
        <ScrollStrip>
          <Thumb />
        </ScrollStrip>
        <BottomToolbar />
        <StatusBar>
          <StatusCell $w={29} />
          <StatusCell>Right-click for menu. Ctrl-scroll to zoom.</StatusCell>
          <StatusCell $w={31} $end />
        </StatusBar>
      </Window>
    </>
  );
}
